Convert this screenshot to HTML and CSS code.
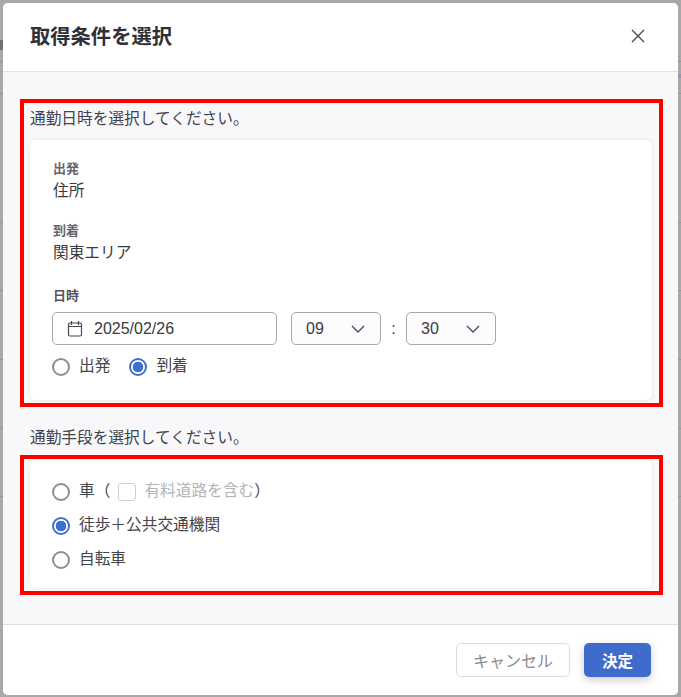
FILE: index.html
```html
<!DOCTYPE html>
<html lang="ja">
<head>
<meta charset="utf-8">
<title>取得条件を選択</title>
<link rel="stylesheet" href="styles.css">
</head>
<body>
<div class="modal">
  <header class="head">
    <h1 class="title">取得条件を選択</h1>
    <svg class="close" width="16" height="16" viewBox="0 0 16 16"><path d="M2 2l12 12M14 2L2 14" stroke="#4a4a50" stroke-width="1.4" fill="none"/></svg>
  </header>
  <main class="body">
    <section class="mark mark-date">
      <p class="lead">通勤日時を選択してください。</p>
      <div class="card card-date">
        <div class="small">出発</div>
        <div class="val">住所</div>
        <div class="small small-2">到着</div>
        <div class="val">関東エリア</div>
        <div class="small small-3">日時</div>
        <div class="fields">
          <div class="input date">
            <svg width="16" height="17" viewBox="0 0 16 17"><rect x="1.5" y="3" width="13" height="13" rx="1.5" stroke="#4a4a50" stroke-width="1.2" fill="none"/><path d="M1.5 6.5h13M4.5 1v4M11.5 1v4" stroke="#4a4a50" stroke-width="1.2" fill="none"/></svg>
            <span>2025/02/26</span>
          </div>
          <div class="input sel"><span>09</span><svg width="14" height="8" viewBox="0 0 14 8"><path d="M1 1l6 6 6-6" stroke="#4a4a50" stroke-width="1.3" fill="none"/></svg></div>
          <span class="colon">:</span>
          <div class="input sel"><span>30</span><svg width="14" height="8" viewBox="0 0 14 8"><path d="M1 1l6 6 6-6" stroke="#4a4a50" stroke-width="1.3" fill="none"/></svg></div>
        </div>
        <div class="radios">
          <label class="radio"><i class="dot"></i><span class="txt">出発</span></label>
          <label class="radio"><i class="dot on"></i><span class="txt">到着</span></label>
        </div>
      </div>
    </section>
    <p class="lead lead-2">通勤手段を選択してください。</p>
    <section class="mark mark-way">
      <div class="card card-way">
        <label class="radio"><i class="dot"></i><span class="txt">車（</span><i class="check"></i><span class="txt off">有料道路を含む</span><span class="txt">）</span></label>
        <label class="radio"><i class="dot on"></i><span class="txt">徒歩＋公共交通機関</span></label>
        <label class="radio"><i class="dot"></i><span class="txt">自転車</span></label>
      </div>
    </section>
  </main>
  <footer class="foot">
    <button class="btn cancel">キャンセル</button>
    <button class="btn ok">決定</button>
  </footer>
</div>
</body>
</html>
```
FILE: styles.css
```css
* { box-sizing: border-box; }
html, body { margin: 0; height: 100%; }
body {
  background-color: #a8a8a8;
  background-image:
    linear-gradient(#6f6f7a, #6f6f7a),
    linear-gradient(#8f97b5, #8f97b5),
    linear-gradient(#939393, #939393),
    linear-gradient(#939393, #939393),
    linear-gradient(#939393, #939393),
    linear-gradient(#939393, #939393),
    linear-gradient(#939393, #939393),
    linear-gradient(#939393, #939393),
    linear-gradient(#939393, #939393);
  background-repeat: no-repeat;
  background-size: 3px 10px, 3px 4px, 100% 1px, 100% 1px, 100% 1px, 100% 1px, 100% 1px, 100% 1px, 100% 1px;
  background-position: 0 40px, 100% 74px, 0 61px, 0 93px, 0 222px, 0 290px, 0 359px, 0 428px, 0 496px;
  padding: 3px 3px 2px 3px;
  font-family: "Liberation Sans", "Noto Sans CJK JP", sans-serif;
  color: #3a3a40;
  overflow: hidden;
}
.modal {
  height: 692px;
  background: #f8f8fb;
  border-radius: 5px;
  display: flex;
  flex-direction: column;
  overflow: hidden;
}
.head {
  height: 69px;
  flex: none;
  background: #fff;
  border-bottom: 1px solid #e2e2e6;
  display: flex;
  align-items: center;
  justify-content: space-between;
  padding: 0 32px 4px 27px;
}
.title { margin: 0; font-size: 20.3px; font-weight: 700; color: #303036; }
.close { margin-top: 1px; }
.body { flex: 1; padding: 27px 15px 0 17px; }
.mark { border: 4px solid #ff0000; padding: 0 7px 3px 6px; }
.mark-date { height: 308px; }
.mark-way { height: 140px; padding-top: 1px; }
.lead { margin: 0; height: 37px; font-size: 15.7px; line-height: 32px; color: #44444a; }
.lead-2 { height: 48px; padding: 0 10px; line-height: 61px; }
.card {
  background: #fff;
  border-radius: 5px;
  box-shadow: 0 0 3px rgba(0,0,0,.12);
  padding: 0 22px;
}
.card-date { height: 260px; padding-top: 20px; }
.card-way { height: 128px; padding-top: 19px; display: flex; flex-direction: column; gap: 8px; }
.small { font-size: 13px; line-height: 17px; font-weight: 700; color: #66666c; margin-left: 1px; }
.small-2 { margin-top: 20px; }
.small-3 { margin-top: 23px; color: #55555b; }
.val { font-size: 15.7px; line-height: 22px; margin: 3px 0 0 1px; color: #3a3a40; }
.fields { display: flex; align-items: center; margin-top: 8px; }
.input {
  height: 33px;
  border: 1px solid #a8a8ac;
  border-radius: 5px;
  background: #fff;
  display: flex;
  align-items: center;
  font-size: 16px;
  color: #3a3a40;
}
.date { width: 225px; padding-left: 14px; gap: 11px; margin-right: 14px; }
.sel { width: 90px; padding: 0 15px 0 14px; justify-content: space-between; background: #fcfcff; }
.colon { width: 25px; text-align: center; font-size: 16px; }
.radios { display: flex; gap: 19px; margin-top: 9px; }
.radio { display: flex; align-items: center; height: 26px; font-size: 15.7px; color: #44444a; }
.txt { margin-bottom: 6px; }
.dot {
  width: 18px;
  height: 18px;
  border-radius: 50%;
  border: 2px solid #8e8e92;
  background: #fff;
  margin-right: 9px;
  flex: none;
}
.dot.on { border-color: #3f6fd0; background: radial-gradient(circle, #3f6fd0 0 5px, #fff 5.6px); }
.check {
  width: 18px;
  height: 18px;
  border: 1.5px solid #cfcfd2;
  border-radius: 3px;
  margin: 0 8px 0 8px;
}
.off { color: #b4b4b8; }
.foot {
  height: 71px;
  flex: none;
  background: #fff;
  border-top: 1px solid #dfdfe4;
  display: flex;
  justify-content: flex-end;
  align-items: flex-start;
  padding: 18px 27px 0 0;
  gap: 14px;
}
.btn {
  height: 34px;
  border-radius: 5px;
  font-family: inherit;
  font-size: 16px;
  padding: 0;
}
.cancel { width: 114px; background: #fff; border: 1px solid #dcdce0; color: #8a8a90; }
.ok { width: 67px; background: #3f6ccc; border: 0; color: #fff; font-weight: 700; font-size: 15.5px; box-shadow: 0 3px 8px rgba(0,0,0,.2); }
```
